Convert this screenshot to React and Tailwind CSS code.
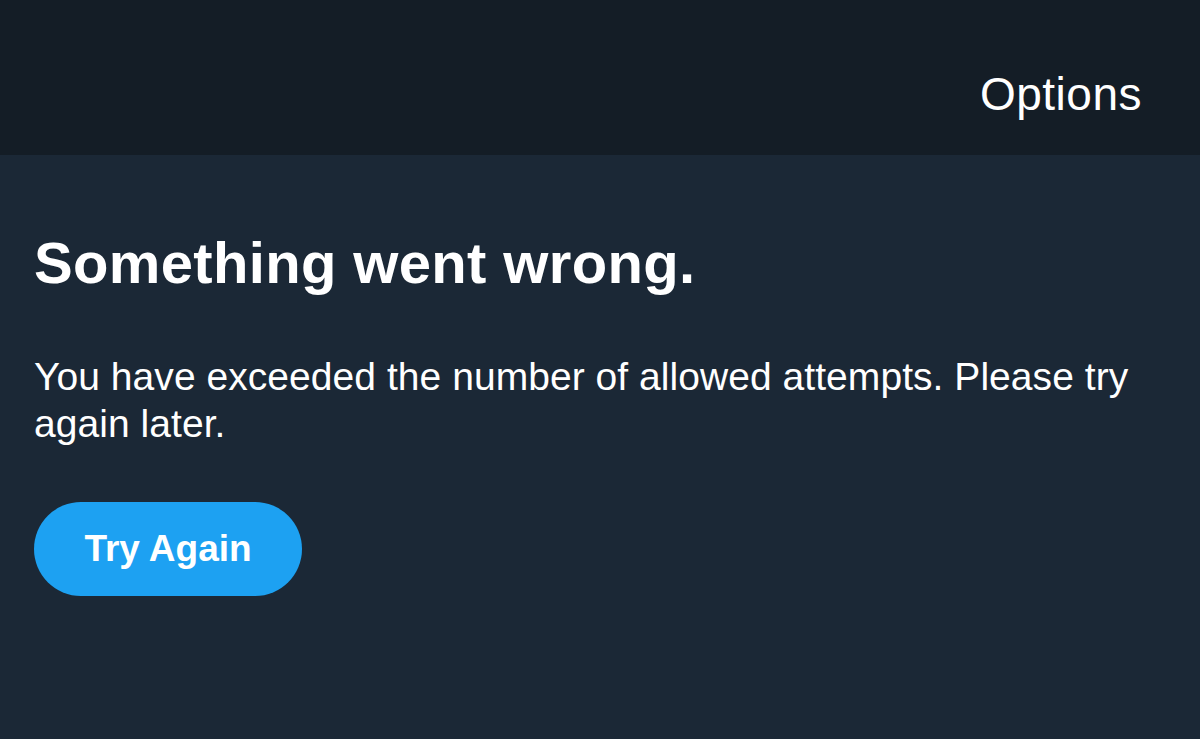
export default function App() {
  return (
    <div className="w-[1200px] h-[739px] flex flex-col bg-[#1b2836] overflow-hidden" style={{ fontFamily: '"Liberation Sans", Arial, sans-serif' }}>
      <div className="h-[155px] shrink-0 bg-[#141d26] flex justify-end items-start pt-[71px] pr-[58px]">
        <span className="text-[46px] leading-[46px] tracking-[0.5px] text-white">Options</span>
      </div>
      <div className="flex flex-col items-start pl-[34px] pr-[50px]">
        <h1 className="mt-[79px] text-[58px] leading-[58px] font-bold tracking-[0.35px] text-white">Something went wrong.</h1>
        <p className="mt-[61px] text-[39px] leading-[47px] tracking-[0.05px] text-white">
          You have exceeded the number of allowed attempts. Please try again later.
        </p>
        <button className="mt-[55px] w-[268px] h-[94px] rounded-full bg-[#1da1f2] text-white text-[37px] font-bold flex items-center justify-center">
          Try Again
        </button>
      </div>
    </div>
  );
}
